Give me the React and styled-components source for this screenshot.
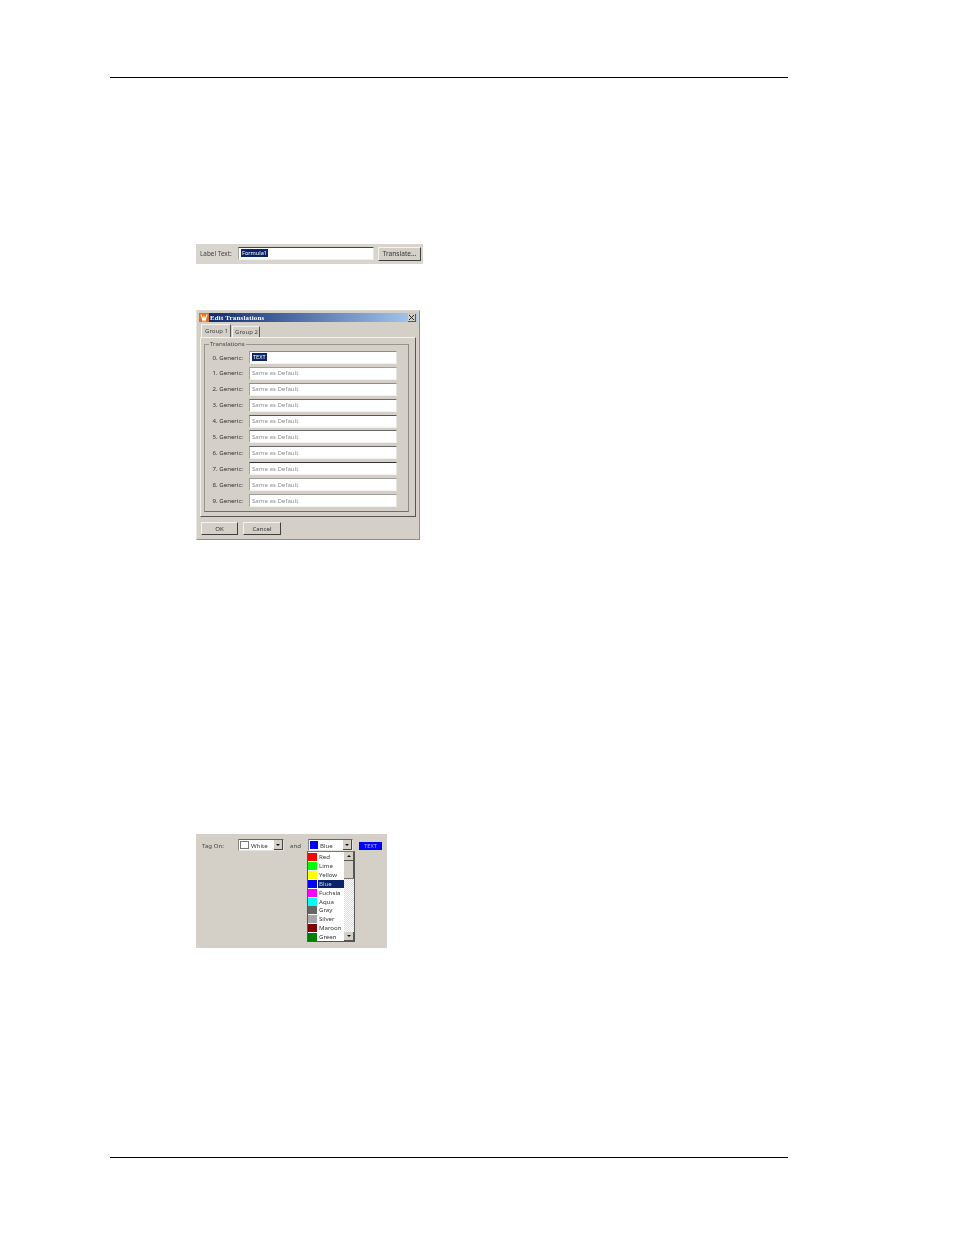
import styled, { createGlobalStyle } from 'styled-components';

const face = '#d4d0c8';
const ink = '#333333';
const selection = '#0a246a';
const soften = 'filter: blur(0.35px);';

const colors = [
  ['Red', '#ff0000'],
  ['Lime', '#00ff00'],
  ['Yellow', '#ffff00'],
  ['Blue', '#0000ff'],
  ['Fuchsia', '#ff00ff'],
  ['Aqua', '#00ffff'],
  ['Gray', '#666666'],
  ['Silver', '#a6a6a6'],
  ['Maroon', '#800000'],
  ['Green', '#008000'],
];

const GlobalStyle = createGlobalStyle`
  html, body {
    margin: 0;
    background: #ffffff;
  }
  body {
    font-family: "Noto Sans", "Liberation Sans", Arial, sans-serif;
    font-size: 6.1px;
    color: ${ink};
  }
`;

const Page = styled.div`
  width: 954px;
  height: 1235px;
  box-sizing: border-box;
  padding: 77px 166px 0 110px;
  display: flex;
  flex-direction: column;
`;

const Rule = styled.hr`
  height: 1px;
  margin: 0;
  border: 0;
  background: #000000;
  flex: none;
`;

const Figures = styled.div`
  padding: 166px 0 0 86px;
  height: 1079px;
  box-sizing: border-box;
  flex: none;
  display: flex;
  flex-direction: column;
`;

const LabelBar = styled.div`
  width: 227px;
  height: 20px;
  box-sizing: border-box;
  padding: 3px 3px 0 4px;
  background: #d8d5ce;
  display: flex;
  align-items: flex-start;
  ${soften}
`;

const BarLabel = styled.span`
  width: 38px;
  line-height: 13px;
  font-size: 6.4px;
  color: #444444;
  flex: none;
`;

const Field = styled.div`
  width: ${(p) => p.$width}px;
  height: 13px;
  box-sizing: border-box;
  flex: none;
  background: #ffffff;
  border-style: solid;
  border-width: 1.5px 1px 1px 1px;
  border-color: ${(p) => p.$edge || '#777777'} #e6e3dd #f4f2ee #a5a29b;
  display: flex;
  align-items: center;
  padding: 0 0 1px 2px;
  color: #8c8c8c;
  white-space: nowrap;
`;

const Selected = styled.span`
  background: ${selection};
  color: #ffffff;
  font-size: 5.6px;
  line-height: 8px;
  padding: 0 1px;
`;

const PushButton = styled.div`
  box-sizing: border-box;
  width: ${(p) => p.$width}px;
  height: ${(p) => p.$height}px;
  margin-left: ${(p) => p.$gap || 0}px;
  padding-bottom: 1px;
  background: ${face};
  border-style: solid;
  border-width: 1px 1.5px 1.5px 1px;
  border-color: #f4f2ee #3f3f3f #3f3f3f #f4f2ee;
  display: flex;
  align-items: center;
  justify-content: center;
  color: #333333;
  font-size: ${(p) => p.$size || 6.1}px;
  flex: none;
`;

const Dialog = styled.div`
  margin-top: 46px;
  width: 224px;
  height: 230px;
  box-sizing: border-box;
  padding: 2px 3px;
  background: ${face};
  border: 1px solid #8f8d88;
  border-top-color: #d8d5ce;
  border-left-color: #e8e6e0;
  display: flex;
  flex-direction: column;
  ${soften}
`;

const TitleBar = styled.div`
  height: 9px;
  width: 218px;
  flex: none;
  margin-left: -1px;
  background: linear-gradient(90deg, #0a246a, #a6caf0);
  color: #ffffff;
  font: bold 6.8px/9px "Liberation Serif", serif;
  display: flex;
  align-items: center;
  justify-content: space-between;
  letter-spacing: 0.25px;
`;

const TitleText = styled.span`
  display: flex;
  align-items: center;
  gap: 1px;
`;

const CloseBox = styled.span`
  width: 8px;
  height: 8px;
  margin-right: 1px;
  box-sizing: border-box;
  background: ${face};
  border-right: 1px solid #555555;
  border-bottom: 1px solid #555555;
  display: flex;
  align-items: center;
  justify-content: center;
`;

const Tabs = styled.div`
  display: flex;
  align-items: flex-end;
  height: 15px;
  margin-left: 1px;
  flex: none;
`;

const Tab = styled.div`
  box-sizing: border-box;
  width: ${(p) => p.$width}px;
  height: ${(p) => (p.$active ? 13 : 11)}px;
  margin-right: 1px;
  padding-left: ${(p) => (p.$active ? 3 : 2)}px;
  line-height: ${(p) => (p.$active ? 11 : 10)}px;
  white-space: nowrap;
  border-top: 1px solid #f4f2ee;
  border-left: 1px solid #f4f2ee;
  border-right: 1px solid #555555;
  color: #444444;
`;

const TabPane = styled.div`
  box-sizing: border-box;
  width: 216px;
  height: 180px;
  padding: 3px 0 0 3px;
  flex: none;
  border-style: solid;
  border-width: 1px;
  border-color: #f4f2ee #555555 #555555 #f4f2ee;
`;

const GroupBox = styled.fieldset`
  box-sizing: border-box;
  width: 205px;
  height: 171px;
  margin: 0;
  padding: 3px 0 0 0;
  border: 1px solid #98958e;
  border-right-color: #8c8a84;
  border-bottom-color: #706e69;
  display: flex;
  flex-direction: column;
  gap: 2.9px;
  min-width: 0;
`;

const GroupTitle = styled.legend`
  margin-left: 4px;
  padding: 0 1px 1px;
  line-height: 6px;
  color: #444444;
`;

const Row = styled.div`
  display: flex;
  align-items: center;
  height: 13px;
`;

const RowLabel = styled.span`
  width: 38px;
  margin-right: 6px;
  padding-bottom: 1px;
  text-align: right;
  color: #333333;
  flex: none;
`;

const DialogButtons = styled.div`
  display: flex;
  gap: 5px;
  margin: 5px 0 0 1px;
`;

const TagPanel = styled.div`
  position: relative;
  margin-top: 294px;
  width: 191px;
  height: 114px;
  box-sizing: border-box;
  padding: 5px 0 0 6px;
  background: ${face};
  display: flex;
  align-items: flex-start;
  ${soften}
`;

const TagLabel = styled.span`
  width: ${(p) => p.$width}px;
  padding-left: ${(p) => p.$inset || 0}px;
  box-sizing: border-box;
  line-height: 13px;
  color: #444444;
  flex: none;
`;

const Select = styled.div`
  box-sizing: border-box;
  width: ${(p) => p.$width}px;
  height: 12px;
  flex: none;
  background: #ffffff;
  border-style: solid;
  border-width: 1px;
  border-color: #666666 #e6e3dd #e6e3dd #888888;
  display: flex;
  align-items: center;
  padding-left: 1px;
  gap: 2px;
  color: #333333;
`;

const Swatch = styled.span`
  width: ${(p) => p.$size}px;
  height: 8px;
  box-sizing: border-box;
  background: ${(p) => p.$color};
  border: ${(p) => (p.$outlined ? '1px solid #777777' : 'none')};
  flex: none;
`;

const SelectArrow = styled.span`
  margin-left: auto;
  width: 9px;
  height: 10px;
  background: ${face};
  border-right: 1px solid #444444;
  border-bottom: 1px solid #444444;
  box-sizing: border-box;
  display: flex;
  align-items: center;
  justify-content: center;
`;

const Arrow = styled.span`
  width: 0;
  height: 0;
  border-left: ${(p) => p.$size || 2}px solid transparent;
  border-right: ${(p) => p.$size || 2}px solid transparent;
  border-${(p) => (p.$up ? 'bottom' : 'top')}: ${(p) => p.$size || 2}px solid #111111;
`;

const Sample = styled.div`
  margin: 3px 0 0 6px;
  width: 23px;
  height: 8px;
  background: #0000ff;
  color: #b8b8ff;
  line-height: 8px;
  text-align: center;
  font-size: 5.6px;
`;

const ListBox = styled.div`
  position: absolute;
  left: 111px;
  top: 17px;
  width: 48px;
  height: 91px;
  box-sizing: border-box;
  background: #ffffff;
  border: 1px solid #555555;
  border-top-color: #777777;
  display: flex;
`;

const ListItems = styled.div`
  flex: 1;
  padding-top: 1px;
  display: flex;
  flex-direction: column;
  min-width: 0;
`;

const ListItem = styled.div`
  height: 8.85px;
  flex: none;
  display: flex;
  align-items: center;
  gap: 1px;
  color: #333333;
`;

const ItemName = styled.span`
  flex: 1;
  line-height: 8px;
  padding-left: 1px;
  background: ${(p) => (p.$selected ? selection : 'transparent')};
  color: ${(p) => (p.$selected ? '#c8d0f0' : 'inherit')};
`;

const ScrollTrack = styled.div`
  width: 10px;
  flex: none;
  background: repeating-conic-gradient(#dedbd5 0 25%, #ffffff 0 50%) 0 0 / 2px 2px;
  display: flex;
  flex-direction: column;
`;

const ScrollButton = styled.div`
  height: 9px;
  background: ${face};
  border-right: 1px solid #555555;
  border-bottom: 1px solid #555555;
  box-sizing: border-box;
  display: flex;
  align-items: center;
  justify-content: center;
  flex: none;
`;

const ScrollThumb = styled.div`
  height: 18px;
  background: ${face};
  border-right: 1px solid #555555;
  border-bottom: 1px solid #777777;
  box-sizing: border-box;
  flex: none;
  margin-bottom: auto;
`;

function App() {
  const rows = [0, 1, 2, 3, 4, 5, 6, 7, 8, 9];
  const edges = ['#8a8a8a', '#a09e99', '#8f8d88', '#6a6a6a', '#555555', '#666666', '#666666', '#333333', '#a09e99', '#a09e99'];

  return (
    <Page>
      <GlobalStyle />
      <Rule />
      <Figures>
        <LabelBar>
          <BarLabel>Label Text:</BarLabel>
          <Field $width={136} $edge="#444444">
            <Selected>Formula1</Selected>
          </Field>
          <PushButton $width={43} $height={14} $gap={4} $size={6.6}>
            Translate...
          </PushButton>
        </LabelBar>

        <Dialog>
          <TitleBar>
            <TitleText>
              <svg width="10" height="9" viewBox="0 0 10 9">
                <rect width="10" height="9" fill="#e8701a" />
                <path d="M2 1.5 L4 7.5 L5 4 L6 7.5 L8 1.5" fill="none" stroke="#ffffff" strokeWidth="1.2" />
              </svg>
              Edit Translations
            </TitleText>
            <CloseBox>
              <svg width="7" height="7" viewBox="0 0 7 7">
                <path d="M1 1 L6 6 M6 1 L1 6" stroke="#222222" strokeWidth="1" />
              </svg>
            </CloseBox>
          </TitleBar>
          <Tabs>
            <Tab $active $width={30}>Group 1</Tab>
            <Tab $width={28}>Group 2</Tab>
          </Tabs>
          <TabPane>
            <GroupBox>
              <GroupTitle>Translations</GroupTitle>
              {rows.map((n) => (
                <Row key={n}>
                  <RowLabel>{n}. Generic:</RowLabel>
                  <Field $width={148} $edge={edges[n]}>
                    {n === 0 ? <Selected>TEXT</Selected> : 'Same as Default'}
                  </Field>
                </Row>
              ))}
            </GroupBox>
          </TabPane>
          <DialogButtons>
            <PushButton $width={37} $height={13}>OK</PushButton>
            <PushButton $width={38} $height={13}>Cancel</PushButton>
          </DialogButtons>
        </Dialog>

        <TagPanel>
          <TagLabel $width={36}>Tag On:</TagLabel>
          <Select $width={46}>
            <Swatch $size={9} $color="#ffffff" $outlined />
            White
            <SelectArrow><Arrow $size={2.5} /></SelectArrow>
          </Select>
          <TagLabel $width={24} $inset={6}>and</TagLabel>
          <Select $width={45}>
            <Swatch $size={8} $color="#0000ff" />
            Blue
            <SelectArrow><Arrow $size={2.5} /></SelectArrow>
          </Select>
          <Sample>TEXT</Sample>
          <ListBox>
            <ListItems>
              {colors.map(([name, color]) => (
                <ListItem key={name}>
                  <Swatch $size={9} $color={color} />
                  <ItemName $selected={name === 'Blue'}>{name}</ItemName>
                </ListItem>
              ))}
            </ListItems>
            <ScrollTrack>
              <ScrollButton><Arrow $up /></ScrollButton>
              <ScrollThumb />
              <ScrollButton><Arrow /></ScrollButton>
            </ScrollTrack>
          </ListBox>
        </TagPanel>
      </Figures>
      <Rule />
    </Page>
  );
}

export default App;
